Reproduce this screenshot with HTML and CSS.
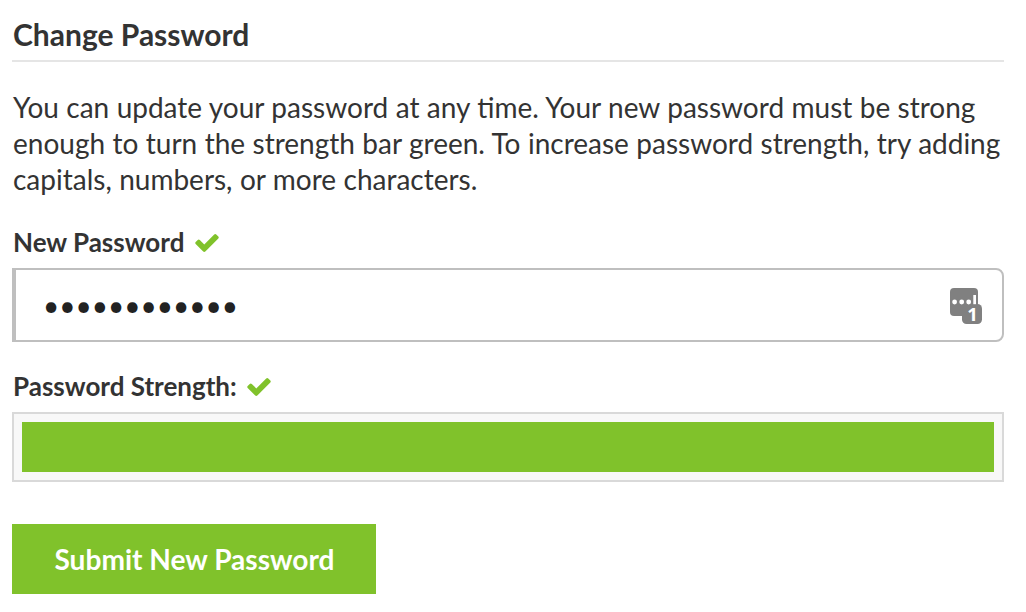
FILE: index.html
```html
<!DOCTYPE html>
<html lang="en">
<head>
<meta charset="UTF-8">
<meta name="viewport" content="width=device-width, initial-scale=1.0">
<title>Change Password</title>
<link rel="stylesheet" href="styles.css">
</head>
<body>
<div class="container">
  <h1>Change Password</h1>
  <p class="intro">You can update your password at any time. Your new password must be strong enough to turn the strength bar green. To increase password strength, try adding capitals, numbers, or more characters.</p>
  <form id="passwordForm">
    <div class="label-row">
      <label for="newPassword">New Password</label>
      <svg class="check" viewBox="121 334 1550 1188"><path d="M1671 566q0 40-28 68l-724 724-136 136q-28 28-68 28t-68-28l-136-136-362-362q-28-28-28-68t28-68l136-136q28-28 68-28t68 28l294 295 656-657q28-28 68-28t68 28l136 136q28 28 28 68z"/></svg>
    </div>
    <div class="password-field">
      <input type="password" id="newPassword" value="Tr4ilMix-982">
      <!-- Password manager icon -->
      <svg class="manager-icon" viewBox="0 0 32 36">
        <rect class="key" x="0" y="0" width="28" height="28" rx="4"/>
        <rect class="key" x="12" y="16" width="20" height="20" rx="4.5"/>
        <circle cx="4.6" cy="14" r="2.4"/>
        <circle cx="11.7" cy="14" r="2.4"/>
        <circle cx="18.7" cy="14" r="2.4"/>
        <rect x="23.3" y="7" width="2.7" height="9.2"/>
        <text x="22.6" y="33">1</text>
      </svg>
    </div>
    <div class="label-row strength-label">
      <span>Password Strength:</span>
      <svg class="check" viewBox="121 334 1550 1188"><path d="M1671 566q0 40-28 68l-724 724-136 136q-28 28-68 28t-68-28l-136-136-362-362q-28-28-28-68t28-68l136-136q28-28 68-28t68 28l294 295 656-657q28-28 68-28t68 28l136 136q28 28 28 68z"/></svg>
    </div>
    <div class="strength">
      <div class="strength-bar" style="width: 100%"></div>
    </div>
    <input type="submit" value="Submit New Password">
  </form>
</div>
</body>
</html>
```
FILE: styles.css
```css
* {
  box-sizing: border-box;
}
body {
  font-family: Lato, sans-serif;
  margin: 0;
  color: #333;
  background-color: #fff;
}
.container {
  width: 992px;
  margin-left: 12px;
  padding-top: 16px;
}
h1 {
  margin: 0;
  height: 46px;
  padding-left: 1px;
  font-size: 30px;
  line-height: 36px;
  border-bottom: 2px solid #e5e5e5;
}
.intro {
  margin: 27px 0 0;
  padding-left: 1px;
  font-size: 28px;
  line-height: 36px;
  word-spacing: 0.25px;
}
.label-row {
  display: flex;
  align-items: center;
  gap: 11px;
  margin-top: 27px;
  padding-left: 1px;
  height: 36px;
  font-size: 26px;
  font-weight: bold;
  line-height: 36px;
}
.strength-label {
  gap: 10px;
  margin-top: 26px;
}
.check {
  width: 24px;
  height: 18px;
  margin-top: 1px;
  fill: #80c22b;
}
.password-field {
  display: flex;
  align-items: center;
  height: 74px;
  margin-top: 8px;
  padding: 0 20px 0 27px;
  border: 2px solid #bfbfbf;
  border-left-width: 4px;
  border-radius: 0 8px 8px 0;
}
input[type="password"] {
  flex: 1;
  padding: 0;
  border: none;
  outline: none;
  font-family: Lato, sans-serif;
  font-size: 28px;
  color: #222;
  background: none;
}
.manager-icon {
  width: 32px;
  height: 36px;
  margin-top: 2px;
  overflow: visible;
  fill: #fff;
}
.manager-icon .key {
  fill: #808080;
}
.manager-icon text {
  font-family: "Open Sans", sans-serif;
  font-size: 18.5px;
  font-weight: bold;
  text-anchor: middle;
}
.strength {
  height: 70px;
  margin-top: 8px;
  padding: 8px;
  border: 2px solid #d9d9d9;
  background-color: #f8f8f8;
}
.strength-bar {
  height: 50px;
  background-color: #80c22b;
}
input[type="submit"] {
  display: block;
  width: 364px;
  height: 70px;
  margin-top: 42px;
  padding: 0 0 0 1px;
  border: none;
  font-family: Lato, sans-serif;
  font-size: 28.1px;
  font-weight: bold;
  color: #fff;
  background-color: #80c22b;
  cursor: pointer;
}
```
